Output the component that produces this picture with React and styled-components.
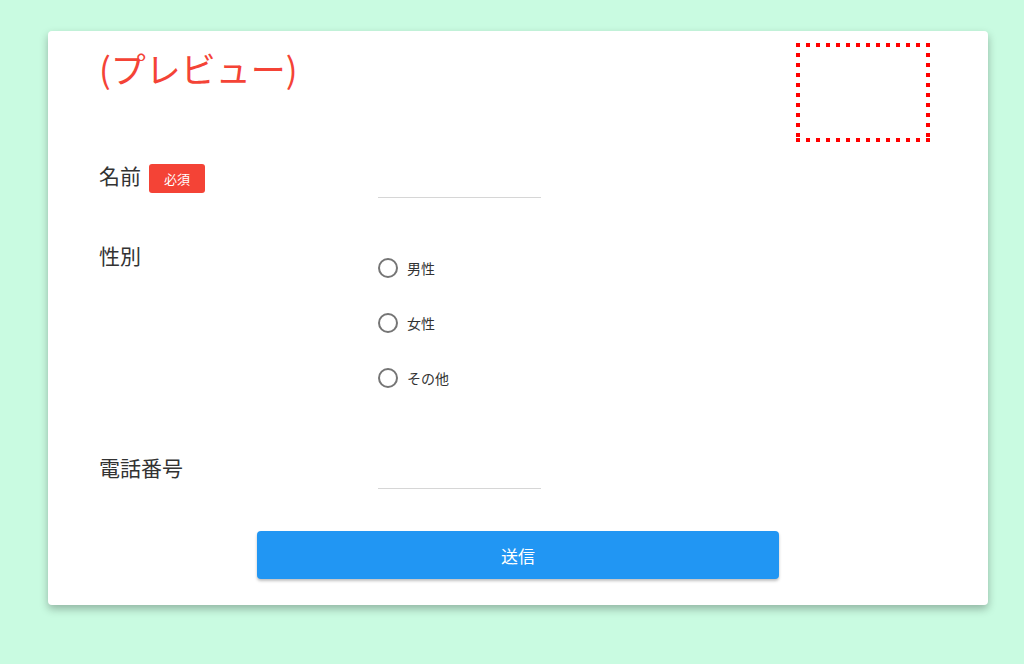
import React, { useState } from 'react';
import styled, { createGlobalStyle } from 'styled-components';

const GlobalStyle = createGlobalStyle`
  body {
    margin: 0;
    background: #c9fbe1;
    font-family: 'Noto Sans CJK JP', 'Noto Sans', sans-serif;
  }
`;

const Page = styled.div`
  width: 1024px;
  height: 664px;
  padding: 31px 36px 0 48px;
  box-sizing: border-box;
`;

const Card = styled.div`
  width: 940px;
  height: 574px;
  background: #fff;
  border-radius: 4px;
  box-shadow: 0 4px 8px rgba(0, 0, 0, 0.28);
  box-sizing: border-box;
  padding: 12px 58px 26px 51px;
  display: flex;
  flex-direction: column;
`;

const Header = styled.div`
  display: flex;
  justify-content: space-between;
  align-items: flex-start;
`;

const Title = styled.h1`
  margin: 3px 0 0;
  font-size: 35px;
  line-height: 44px;
  font-weight: 400;
  color: #f44336;
`;

// square red dots, like the reference's dotted border
const PreviewBox = styled.div`
  width: 134px;
  height: 99px;
  box-sizing: border-box;
  background:
    repeating-linear-gradient(90deg, #ff0000 0 4px, transparent 4px 10px) top left / 100% 4px no-repeat,
    repeating-linear-gradient(90deg, #ff0000 0 4px, transparent 4px 10px) bottom left / 100% 4px no-repeat,
    repeating-linear-gradient(180deg, #ff0000 0 4px, transparent 4px 10px) top left / 4px 100% no-repeat,
    repeating-linear-gradient(180deg, #ff0000 0 4px, transparent 4px 10px) top right / 4px 100% no-repeat;
`;

const Row = styled.div`
  display: grid;
  grid-template-columns: 279px 163px;
  margin-top: ${(p) => p.top}px;
`;

const Label = styled.div`
  display: flex;
  align-items: center;
  gap: 8px;
  height: 28px;
  margin-top: ${(p) => p.offset || 0}px;
  font-size: 21px;
  color: #333;
`;

const Badge = styled.span`
  display: inline-flex;
  align-items: center;
  justify-content: center;
  align-self: flex-start;
  margin-top: 3px;
  width: 56px;
  height: 29px;
  border-radius: 3px;
  background: #f44336;
  color: #fff;
  font-size: 13px;
`;

const TextInput = styled.input`
  height: 37px;
  width: 163px;
  box-sizing: border-box;
  border: none;
  border-bottom: 1px solid #d6d6d6;
  outline: none;
  font-family: inherit;
  font-size: 15px;
  background: transparent;
`;

const RadioList = styled.div`
  display: flex;
  flex-direction: column;
  gap: 35px;
  padding-top: 15px;
`;

const RadioItem = styled.label`
  display: flex;
  align-items: center;
  gap: 9px;
  height: 20px;
  font-size: 14px;
  color: #333;
  cursor: pointer;
`;

const Circle = styled.span`
  width: 20px;
  height: 20px;
  box-sizing: border-box;
  border-radius: 50%;
  border: 2px solid #757575;
  display: flex;
  align-items: center;
  justify-content: center;
  &::after {
    content: '';
    width: 10px;
    height: 10px;
    border-radius: 50%;
    background: ${(p) => (p.checked ? '#2196f3' : 'transparent')};
  }
`;

const SubmitButton = styled.button`
  align-self: center;
  margin: 42px 0 0 7px;
  width: 522px;
  height: 48px;
  border: none;
  border-radius: 4px;
  background: #2196f3;
  color: #fff;
  font-family: inherit;
  font-size: 17px;
  box-shadow: 0 2px 3px rgba(0, 0, 0, 0.25);
  cursor: pointer;
`;

const genders = ['男性', '女性', 'その他'];

const App = () => {
  const [gender, setGender] = useState(null);

  return (
    <>
      <GlobalStyle />
      <Page>
        <Card>
          <Header>
            <Title>(プレビュー)</Title>
            <PreviewBox />
          </Header>

          <Row top={19}>
            <Label>
              名前<Badge>必須</Badge>
            </Label>
            <TextInput />
          </Row>

          <Row top={45}>
            <Label offset={-2}>性別</Label>
            <RadioList>
              {genders.map((g) => (
                <RadioItem key={g} onClick={() => setGender(g)}>
                  <Circle checked={gender === g} />
                  {g}
                </RadioItem>
              ))}
            </RadioList>
          </Row>

          <Row top={64}>
            <Label offset={1}>電話番号</Label>
            <TextInput />
          </Row>

          <SubmitButton>送信</SubmitButton>
        </Card>
      </Page>
    </>
  );
};

export default App;
